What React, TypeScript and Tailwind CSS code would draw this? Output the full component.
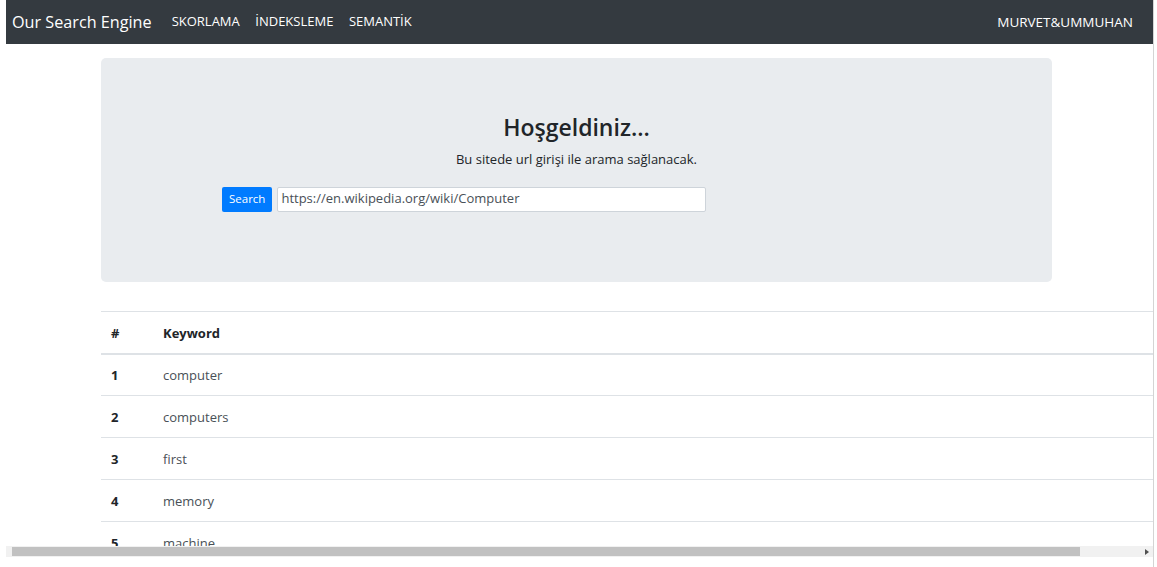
const keywords = ['computer', 'computers', 'first', 'memory', 'machine'];

const font = { fontFamily: '"Open Sans", "Noto Sans", Arial, sans-serif' };

export default function App() {
    return (
        <div className="w-[1157px] h-[567px] overflow-hidden bg-white flex text-[#212529]" style={font}>
            <div className="ml-[6px] w-[1148px] h-full flex flex-col border-r border-[#d4d4d4]">
                {/* Navbar */}
                <nav className="h-[44px] shrink-0 bg-[#343a40] flex items-center pl-[6px] pr-[20px]">
                    <span className="text-[16.2px] text-white mr-[20px]">Our Search Engine</span>
                    <div className="flex gap-[15.5px] text-[13px] text-white">
                        <span>SKORLAMA</span>
                        <span>İNDEKSLEME</span>
                        <span>SEMANTİK</span>
                    </div>
                    <span className="ml-auto text-[13.5px] text-white">MURVET&amp;UMMUHAN</span>
                </nav>

                {/* Content */}
                <div className="flex-1 overflow-hidden pl-[95px] pt-[14px]">
                    <div className="w-[951px] h-[224px] bg-[#e9ecef] rounded-[5px] flex flex-col items-center pt-[58px]">
                        <h1 className="text-[23px] font-semibold leading-none text-[#212529]">Hoşgeldiniz...</h1>
                        <p className="text-[13px] mt-[11px] text-[#212529]">Bu sitede url girişi ile arama sağlanacak.</p>
                        <div className="self-start ml-[121px] mt-[17px] flex items-center gap-[5px]">
                            <button className="h-[25px] px-[7px] bg-[#007bff] text-white text-[11.5px] rounded-[2px]">Search</button>
                            <div className="h-[25px] w-[429px] bg-white border border-[#ced4da] rounded-[2px] flex items-center px-[3px] text-[13px] text-[#495057]">
                                https://en.wikipedia.org/wiki/Computer
                            </div>
                        </div>
                    </div>

                    <table className="mt-[29px] w-[1060px] text-[13px] border-collapse">
                        <thead>
                            <tr className="border-t border-[#dee2e6] border-b-2">
                                <th className="h-[42px] w-[62px] text-left pl-[10px] pt-[2px] font-bold">#</th>
                                <th className="h-[42px] text-left pt-[2px] font-bold">Keyword</th>
                            </tr>
                        </thead>
                        <tbody>
                            {keywords.map((k, i) => (
                                <tr key={k} className="border-t border-[#dee2e6]">
                                    <td className="h-[42px] pl-[10px] pt-[2px] font-bold">{i + 1}</td>
                                    <td className="h-[42px] pt-[2px] text-[#495057]">{k}</td>
                                </tr>
                            ))}
                        </tbody>
                    </table>
                </div>

                {/* Horizontal scrollbar */}
                <div className="h-[11px] shrink-0 bg-[#f1f1f1] flex items-center pl-[6px] pr-[4px]">
                    <div className="h-[9px] w-[1068px] bg-[#c1c1c1]" />
                    <div className="ml-auto w-0 h-0 border-y-[3px] border-y-transparent border-l-[4px] border-l-[#505050]" />
                </div>
                <div className="h-[10px] shrink-0" />
            </div>
        </div>
    );
}
